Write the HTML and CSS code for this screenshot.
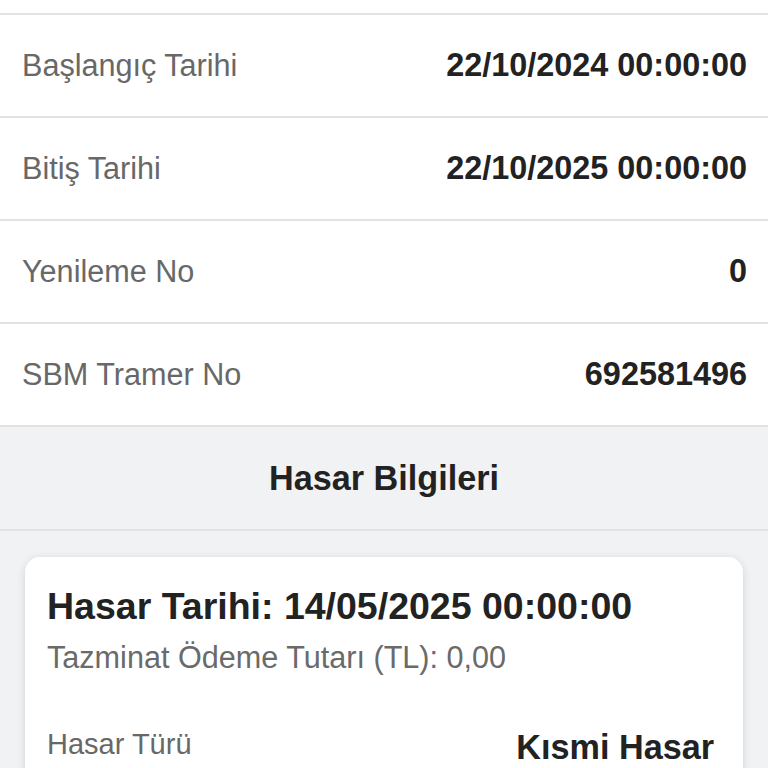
FILE: index.html
```html
<!DOCTYPE html>
<html lang="tr">
<head>
<meta charset="utf-8">
<link rel="stylesheet" href="styles.css">
</head>
<body>
<div class="page">
  <div class="top-spacer"></div>
  <div class="row"><span class="label">Başlangıç Tarihi</span><span class="value">22/10/2024 00:00:00</span></div>
  <div class="row"><span class="label">Bitiş Tarihi</span><span class="value">22/10/2025 00:00:00</span></div>
  <div class="row"><span class="label">Yenileme No</span><span class="value">0</span></div>
  <div class="row"><span class="label">SBM Tramer No</span><span class="value">692581496</span></div>
  <div class="section">
    <div class="section-head">Hasar Bilgileri</div>
    <div class="card">
      <div class="card-title">Hasar Tarihi: 14/05/2025 00:00:00</div>
      <div class="card-sub">Tazminat Ödeme Tutarı (TL): 0,00</div>
      <div class="card-row"><span class="card-label">Hasar Türü</span><span class="card-value">Kısmi Hasar</span></div>
    </div>
  </div>
</div>
</body>
</html>
```

FILE: styles.css
```css
html, body {
  margin: 0;
  padding: 0;
  background: #ffffff;
  font-family: "Liberation Sans", Arial, sans-serif;
}
.page {
  width: 768px;
  height: 768px;
  overflow: hidden;
}
.top-spacer {
  height: 13px;
  border-bottom: 2px solid #e2e2e2;
}
.row {
  height: 101px;
  border-bottom: 2px solid #e2e2e2;
  display: flex;
  align-items: center;
  justify-content: space-between;
  padding: 0 21px 0 22px;
  background: #ffffff;
}
.label {
  font-size: 30.6px;
  color: #686868;
}
.value {
  font-size: 32.4px;
  font-weight: bold;
  color: #222222;
}
.section {
  background: #f1f2f4;
  min-height: 400px;
}
.section-head {
  height: 102px;
  display: flex;
  align-items: center;
  justify-content: center;
  font-size: 34.2px;
  font-weight: bold;
  color: #222222;
  border-bottom: 2px solid #e1e2e4;
}
.card {
  margin: 26px 25px 0 25px;
  background: #ffffff;
  border-radius: 15px;
  box-shadow: 0 2px 9px rgba(0, 0, 0, 0.13);
  padding: 28px 29px 30px 22px;
}
.card-title {
  font-size: 37.5px;
  font-weight: bold;
  color: #222222;
}
.card-sub {
  margin-top: 12px;
  font-size: 30.6px;
  color: #6a6a6a;
}
.card-row {
  margin-top: 53px;
  display: flex;
  align-items: flex-start;
  justify-content: space-between;
}
.card-label {
  font-size: 29px;
  color: #686868;
}
.card-value {
  font-size: 34.2px;
  font-weight: bold;
  color: #222222;
}
```
